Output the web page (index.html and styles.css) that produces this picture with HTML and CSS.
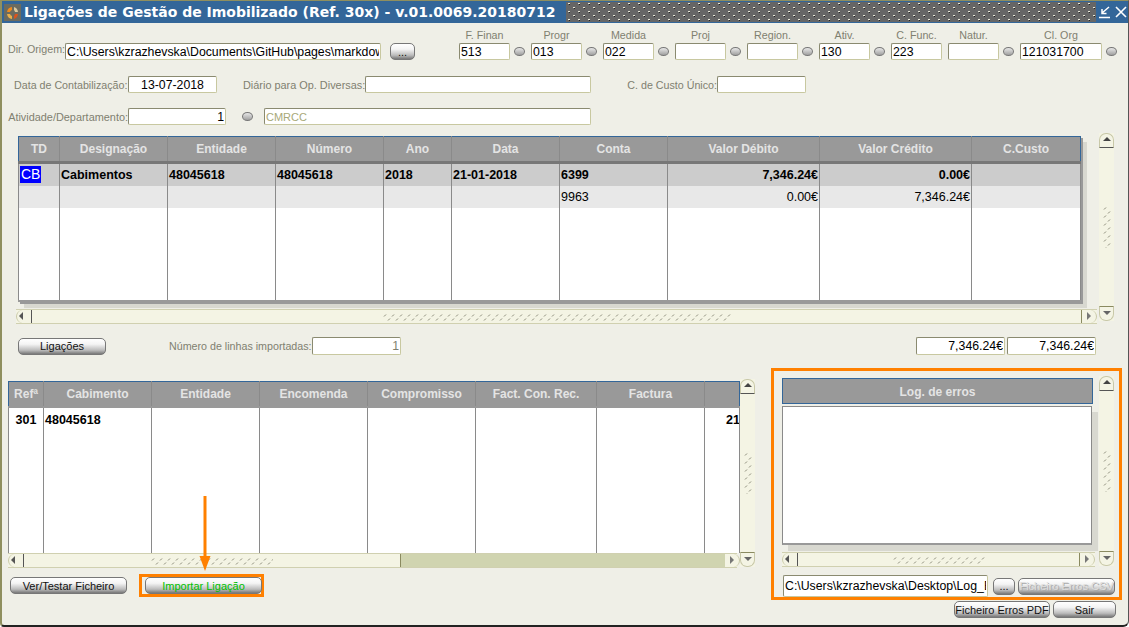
FILE: index.html
```html
<!DOCTYPE html>
<html>
<head>
  <title>Ligações de Gestão de Imobilizado</title>
  <link rel="stylesheet" href="styles.css">
</head>
<body>
  <svg class="defs" width="0" height="0">
    <defs>
      <pattern id="titleDots" width="10" height="8" patternUnits="userSpaceOnUse">
        <rect x="2" y="1" width="2" height="1" fill="#e8e8d8"/><rect x="3" y="2" width="1" height="1" fill="#222"/>
        <rect x="7" y="5" width="2" height="1" fill="#e8e8d8"/><rect x="8" y="6" width="1" height="1" fill="#222"/>
      </pattern>
      <pattern id="gripH" width="8" height="8" patternUnits="userSpaceOnUse">
        <path d="M1 3.5L3 1.5M5 7.5L7 5.5" stroke="#8a8a78" fill="none"/>
      </pattern>
      <pattern id="gripV" width="8" height="8" patternUnits="userSpaceOnUse">
        <path d="M1 3.5L3 1.5M5 7.5L7 5.5" stroke="#8a8a78" fill="none"/>
      </pattern>
    </defs>
  </svg>

  <div class="window">
    <div class="titlebar">
      <svg class="app-icon" width="17" height="17" viewBox="0 0 17 17">
        <rect width="17" height="17" fill="#6b6b60"/>
        <path d="M8 3A6 6 0 0 0 3 8L6 8A3 3 0 0 1 8 6Z" fill="#f08a1c"/>
        <path d="M10 3A6 6 0 0 1 14 8L11 8A3 3 0 0 0 10 6Z" fill="#d9c8a0"/>
        <path d="M3 10A6 6 0 0 0 8 15L8 12A3 3 0 0 1 6 10Z" fill="#e9b04a"/>
        <path d="M14 10A6 6 0 0 1 10 15L10 12A3 3 0 0 0 11 10Z" fill="#d8541e"/>
      </svg>
      <span class="title">Ligações de Gestão de Imobilizado (Ref. 30x) - v.01.0069.20180712</span>
      <svg class="title-dots" height="20"><rect width="100%" height="20" fill="#666"/><rect width="100%" height="20" fill="url(#titleDots)"/></svg>
      <svg class="win-btn" width="14" height="14" viewBox="0 0 14 14"><path d="M1 12.5H12M11 2L4 8M4 4V8.5H8.5" stroke="#fff" stroke-width="1.5" fill="none"/></svg>
      <svg class="win-btn" width="14" height="14" viewBox="0 0 14 14"><path d="M2 2L12 12M12 2L2 12" stroke="#fff" stroke-width="1.6" fill="none"/></svg>
    </div>

    <div class="origin-row">
      <label class="lbl lbl-origin">Dir. Origem:</label>
      <input class="field w-path" type="text" value="C:\Users\kzrazhevska\Documents\GitHub\pages\markdown">
      <button class="btn btn-dots">...</button>
      <div class="codes">
        <div class="code"><span class="cap">F. Finan</span><div class="code-in"><input class="field" value="513"><i class="radio"></i></div></div>
        <div class="code"><span class="cap">Progr</span><div class="code-in"><input class="field" value="013"><i class="radio"></i></div></div>
        <div class="code"><span class="cap">Medida</span><div class="code-in"><input class="field" value="022"><i class="radio"></i></div></div>
        <div class="code"><span class="cap">Proj</span><div class="code-in"><input class="field"><i class="radio"></i></div></div>
        <div class="code"><span class="cap">Region.</span><div class="code-in"><input class="field"><i class="radio"></i></div></div>
        <div class="code"><span class="cap">Ativ.</span><div class="code-in"><input class="field" value="130"><i class="radio"></i></div></div>
        <div class="code code-bare"><span class="cap">C. Func.</span><div class="code-in"><input class="field" value="223"></div></div>
        <div class="code"><span class="cap">Natur.</span><div class="code-in"><input class="field"><i class="radio"></i></div></div>
        <div class="code code-wide"><span class="cap">Cl. Org</span><div class="code-in"><input class="field" value="121031700"><i class="radio"></i></div></div>
      </div>
    </div>

    <div class="date-row">
      <label class="lbl lbl-date">Data de Contabilização:</label>
      <input class="field field-center w-date" value="13-07-2018">
      <label class="lbl lbl-diario">Diário para Op. Diversas:</label>
      <input class="field w-diario">
      <label class="lbl lbl-custo">C. de Custo Único:</label>
      <input class="field w-date">
    </div>

    <div class="dept-row">
      <label class="lbl lbl-dept">Atividade/Departamento:</label>
      <input class="field field-right w-dept" value="1">
      <i class="radio radio-dept"></i>
      <input class="field field-olive w-cmrcc" value="CMRCC">
    </div>

    <div class="main-grid">
      <div class="grid-side">
        <table class="grid grid-top">
          <colgroup><col class="c41"><col class="c108"><col class="c108"><col class="c108"><col class="c68"><col class="c108"><col class="c108"><col class="c152"><col class="c152"><col></colgroup>
          <thead><tr><th>TD</th><th>Designação</th><th>Entidade</th><th>Número</th><th>Ano</th><th>Data</th><th>Conta</th><th>Valor Débito</th><th>Valor Crédito</th><th>C.Custo</th></tr></thead>
          <tbody>
            <tr class="row-sel">
              <td class="bold"><span class="selected">CB</span></td><td class="bold">Cabimentos</td><td class="bold">48045618</td><td class="bold">48045618</td><td class="bold">2018</td><td class="bold">21-01-2018</td><td class="bold">6399</td><td class="bold num">7,346.24€</td><td class="bold num">0.00€</td><td></td>
            </tr>
            <tr class="row-alt">
              <td></td><td></td><td></td><td></td><td></td><td></td><td>9963</td><td class="num">0.00€</td><td class="num">7,346.24€</td><td></td>
            </tr>
            <tr class="row-fill"><td></td><td></td><td></td><td></td><td></td><td></td><td></td><td></td><td></td><td></td></tr>
          </tbody>
        </table>
        <div class="hscroll hscroll-top">
          <span class="sb-btn sb-left"></span>
          <span class="sb-thumb"><svg class="grip" width="348" height="8"><rect width="348" height="8" fill="url(#gripH)"/></svg></span>
          <span class="sb-btn sb-right"></span>
        </div>
      </div>
      <div class="vscroll vscroll-top">
        <span class="sb-btn sb-up"></span>
        <span class="sb-thumb"><svg class="grip" width="8" height="42"><rect width="8" height="42" fill="url(#gripV)"/></svg></span>
        <span class="sb-btn sb-down"></span>
      </div>
    </div>

    <div class="totals-row">
      <button class="btn btn-lig">Ligações</button>
      <label class="lbl lbl-linhas">Número de linhas importadas:</label>
      <input class="field field-right field-grey w-date" value="1">
      <input class="field field-right w-total first-total" value="7,346.24€">
      <input class="field field-right w-total" value="7,346.24€">
    </div>

    <div class="lower">
      <div class="lower-left">
        <div class="lower-grid">
          <div class="grid-side">
            <table class="grid grid-bottom">
              <colgroup><col class="c35"><col class="c108"><col class="c108"><col class="c108"><col class="c108"><col class="c121"><col class="c108"><col></colgroup>
              <thead><tr><th>Refª</th><th>Cabimento</th><th>Entidade</th><th>Encomenda</th><th>Compromisso</th><th>Fact. Con. Rec.</th><th>Factura</th><th></th></tr></thead>
              <tbody>
                <tr class="row-first"><td class="bold ref">301</td><td class="bold">48045618</td><td></td><td></td><td></td><td></td><td></td><td class="bold clip">21</td></tr>
                <tr class="row-fill"><td></td><td></td><td></td><td></td><td></td><td></td><td></td><td></td></tr>
              </tbody>
            </table>
            <div class="hscroll hscroll-bottom">
              <span class="sb-btn sb-left"></span>
              <span class="sb-thumb"><svg class="grip" width="122" height="8"><rect width="122" height="8" fill="url(#gripH)"/></svg></span>
              <span class="sb-track"></span>
              <span class="sb-btn sb-right"></span>
            </div>
          </div>
          <div class="vscroll vscroll-bottom">
            <span class="sb-btn sb-up"></span>
            <span class="sb-thumb"><svg class="grip" width="8" height="42"><rect width="8" height="42" fill="url(#gripV)"/></svg></span>
            <span class="sb-btn sb-down"></span>
          </div>
        </div>
        <div class="left-btns">
          <button class="btn btn-testar">Ver/Testar Ficheiro</button>
          <span class="mark-box"><button class="btn btn-importar">Importar Ligação</button></span>
        </div>
        <svg class="arrow" width="14" height="76" viewBox="0 0 14 76">
          <path d="M7 0V62" stroke="#ff8000" stroke-width="3" fill="none"/>
          <path d="M1.5 60H12.5L7 75Z" fill="#ff8000"/>
        </svg>
      </div>

      <div class="lower-right">
        <div class="log-box">
          <div class="log-body">
            <div class="grid-side">
              <div class="log-head">Log. de erros</div>
              <div class="log-area"></div>
              <div class="hscroll hscroll-log">
                <span class="sb-btn sb-left"></span>
                <span class="sb-thumb"><svg class="grip" width="92" height="8"><rect width="92" height="8" fill="url(#gripH)"/></svg></span>
                <span class="sb-btn sb-right"></span>
              </div>
            </div>
            <div class="vscroll vscroll-log">
              <span class="sb-btn sb-up"></span>
              <span class="sb-thumb"><svg class="grip" width="8" height="42"><rect width="8" height="42" fill="url(#gripV)"/></svg></span>
              <span class="sb-btn sb-down"></span>
            </div>
          </div>
          <div class="log-path">
            <input class="field w-log" value="C:\Users\kzrazhevska\Desktop\Log_Erros">
            <button class="btn btn-dots2">...</button>
            <button class="btn btn-csv">Ficheiro Erros CSV</button>
          </div>
        </div>
        <div class="right-btns">
          <button class="btn btn-pdf">Ficheiro Erros PDF</button>
          <button class="btn btn-sair">Sair</button>
        </div>
      </div>
    </div>
  </div>
</body>
</html>
```

FILE: styles.css
```css
* {
  box-sizing: border-box;
}
html, body {
  margin: 0;
  padding: 0;
}
body {
  width: 1129px;
  height: 627px;
  overflow: hidden;
  background: #fff;
  font-family: "Liberation Sans", Arial, sans-serif;
  font-size: 11px;
}
.defs {
  position: absolute;
}

.window {
  width: 1129px;
  height: 627px;
  background: #efefe7;
  border-left: 2px solid #8f8f5f;
  border-right: 1px solid #555;
  border-bottom: 2px solid #222;
  border-top: 1px solid #8f8f5f;
  border-bottom-right-radius: 6px;
  border-bottom-left-radius: 4px;
  overflow: hidden;
  position: relative;
}

/* title */
.titlebar {
  height: 22px;
  background: #336699;
  display: flex;
  align-items: center;
  margin-left: -1px;
  padding-left: 3px;
}
.app-icon {
  flex: none;
  margin-right: 3px;
}
.title {
  font-family: "DejaVu Sans", Verdana, sans-serif;
  font-weight: bold;
  font-size: 14px;
  color: #fff;
  white-space: nowrap;
  width: 542px;
  flex: none;
}
.title-dots {
  flex: none;
  width: 530px;
}
.win-btn {
  flex: none;
  margin-left: 2px;
}

/* fields */
.lbl {
  color: #808070;
  white-space: nowrap;
  font-size: 10.7px;
  text-align: right;
  flex: none;
}
.field {
  height: 17px;
  border: 1px solid #c8c8a0;
  border-top-color: #8a8a70;
  border-left-color: #8a8a70;
  border-radius: 2px;
  background: #fff;
  color: #000;
  font-family: "Liberation Sans", Arial, sans-serif;
  font-size: 12.3px;
  padding: 1px 1px;
  margin: 0;
  flex: none;
  width: 51px;
  outline: none;
}
.field-center {
  text-align: center;
}
.field-right {
  text-align: right;
}
.field-olive {
  color: #a8a878;
  font-size: 11px;
}
.field-grey {
  color: #808070;
}
.radio {
  display: block;
  flex: none;
  width: 11px;
  height: 9px;
  border: 1px solid #777;
  border-radius: 50%;
  background: linear-gradient(#e8e8e8, #a0a0a0);
}

.btn {
  height: 17px;
  padding: 0;
  border: 1px solid #777;
  border-radius: 5px;
  background: linear-gradient(#fff 0, #f4f4f4 35%, #bbb 75%, #777 100%);
  color: #111;
  font-family: "Liberation Sans", Arial, sans-serif;
  font-size: 11px;
  white-space: nowrap;
  flex: none;
}

/* top rows */
.origin-row {
  display: flex;
  margin-top: 6px;
  padding-left: 6px;
  height: 31px;
  align-items: flex-end;
}
.lbl-origin {
  width: 57px;
  align-self: flex-end;
  margin-bottom: 5px;
  font-size: 10.7px;
}
.w-path {
  width: 316px;
  margin-left: 0;
}
.btn-dots {
  width: 25px;
  margin-left: 9px;
}
.codes {
  display: flex;
  margin-left: 44px;
}
.code {
  display: flex;
  flex-direction: column;
  width: 72px;
}
.code-bare {
  width: 57px;
}
.code-wide {
  width: 103px;
}
.code-wide .field {
  width: 82px;
}
.cap {
  width: 51px;
  text-align: center;
  color: #808070;
  font-size: 10.7px;
  line-height: 13px;
  margin-bottom: 1px;
}
.code-wide .cap {
  width: 82px;
}
.code-in {
  display: flex;
  align-items: center;
  gap: 4px;
}

.date-row {
  display: flex;
  align-items: center;
  margin-top: 16px;
  padding-left: 12px;
}
.lbl-date {
  width: 113px;
  margin-right: 1px;
  text-align: left;
}
.w-date {
  width: 89px;
}
.lbl-diario {
  margin-left: 26px;
  width: 122px;
  font-size: 10.9px;
}
.w-diario {
  width: 226px;
}
.lbl-custo {
  margin-left: 36px;
  width: 90px;
}

.dept-row {
  display: flex;
  align-items: center;
  margin-top: 15px;
  padding-left: 6px;
}
.lbl-dept {
  width: 120px;
  font-size: 10.9px;
}
.w-dept {
  width: 98px;
}
.radio-dept {
  margin-left: 16px;
}
.w-cmrcc {
  width: 327px;
  margin-left: 11px;
}

/* grids */
.main-grid {
  display: flex;
  margin-top: 11px;
  padding-left: 14px;
  height: 188px;
}
.grid-side {
  display: flex;
  flex-direction: column;
  flex: none;
}
.grid {
  table-layout: fixed;
  border-collapse: collapse;
  background: #fff;
  color: #000;
  font-size: 12.5px;
}
.grid th {
  height: 26px;
  background: #999;
  color: #e4e4e4;
  font-size: 12px;
  font-weight: bold;
  padding: 0;
  border: 1px solid #336699;
  border-left-color: #8a8a8a;
  border-right-color: #8a8a8a;
}
.grid th:first-child {
  border-left-color: #336699;
}
.grid th:last-child {
  border-right-color: #336699;
}
.grid thead {
  border-bottom: 3px solid #777;
}
.grid td {
  padding: 0 1px;
  border-right: 1px solid #8a8a8a;
  border-left: 1px solid #8a8a8a;
  white-space: nowrap;
  overflow: hidden;
}
.c35 { width: 35px; }
.c41 { width: 41px; }
.c68 { width: 68px; }
.c108 { width: 108px; }
.c121 { width: 121px; }
.c152 { width: 152px; }

.grid-top {
  width: 1063px;
  margin-left: 2px;
  height: 166px;
  box-shadow: 2px 2px 0 #999, 6px 6px 0 #d8d8d0;
}
.grid-top tbody {
  border-bottom: 2px solid #999;
}
.row-sel td {
  background: #ccc;
  height: 23px;
}
.row-alt td {
  background: #e8e8e8;
  height: 22px;
}
.row-fill td {
  background: #fff;
}
.bold {
  font-weight: bold;
}
.num {
  text-align: right;
}
.selected {
  background: #0000ff;
  color: #fff;
  font-weight: normal;
  font-size: 14px;
  line-height: 17px;
  display: inline-block;
  padding: 0 1px;
}

.hscroll {
  display: flex;
  height: 15px;
  flex: none;
  background: #f4f4e4;
  border-top: 1px solid #d0d0b0;
  border-bottom: 1px solid #d0d0b0;
}
.hscroll-top {
  width: 1081px;
  margin-top: 7px;
}
.sb-btn {
  position: relative;
  flex: none;
  background: #f4f4e4;
  display: block;
}
.sb-btn::after {
  content: "";
  position: absolute;
  border: 4px solid transparent;
}
.hscroll .sb-btn {
  width: 15px;
}
.hscroll .sb-left {
  border-left: 1px solid #c8c8a8;
  border-radius: 7px 0 0 7px;
}
.hscroll .sb-left::after {
  left: 2px;
  top: 2px;
  border-left-width: 0;
  border-right-color: #555;
}
.hscroll .sb-right {
  border-right: 1px solid #c8c8a8;
  border-radius: 0 7px 7px 0;
}
.hscroll .sb-right::after {
  left: 5px;
  top: 2px;
  border-right-width: 0;
  border-left-color: #777;
}
.sb-thumb {
  display: flex;
  align-items: center;
  justify-content: center;
  flex: 1;
  min-width: 0;
  background: #f4f4e4;
  border-left: 1px solid #555;
  border-right: 1px solid #8a8a60;
}
.sb-track {
  background: #d0d4b0;
  flex: none;
  width: 324px;
}

.vscroll {
  display: flex;
  flex-direction: column;
  width: 15px;
  flex: none;
  background: #f4f4e4;
}
.vscroll-top {
  margin-left: 2px;
  height: 188px;
  margin-top: -3px;
}
.vscroll .sb-btn {
  height: 15px;
  width: 15px;
  border: 1px solid #c8c8a8;
}
.vscroll .sb-up {
  border-radius: 7px 7px 0 0;
  border-bottom-color: #555;
}
.vscroll .sb-up::after {
  left: 3px;
  top: 3px;
  border-top-width: 0;
  border-bottom-color: #444;
}
.vscroll .sb-down {
  border-radius: 0 0 7px 7px;
  border-top-color: #8a8a60;
}
.vscroll .sb-down::after {
  left: 3px;
  top: 4px;
  border-bottom-width: 0;
  border-top-color: #666;
}
.vscroll .sb-thumb {
  border: 0;
}
.grip {
  display: block;
  flex: none;
}

/* middle row */
.totals-row {
  display: flex;
  align-items: center;
  margin-top: 13px;
  padding-left: 16px;
  height: 18px;
}
.btn-lig {
  width: 88px;
}
.lbl-linhas {
  width: 143px;
  margin-left: 63px;
  margin-right: 0;
  text-align: left;
}
.totals-row .field {
  height: 18px;
}
.first-total {
  margin-left: 515px;
}
.w-total {
  width: 89px;
  margin-right: 2px;
}

/* lower part */
.lower {
  display: flex;
  margin-top: 13px;
  padding-left: 6px;
}
.lower-left {
  width: 763px;
  flex: none;
  position: relative;
}
.lower-grid {
  display: flex;
  margin-top: 13px;
  height: 188px;
}
.grid-bottom {
  width: 732px;
  height: 172px;
}
.grid-bottom th {
  height: 25px;
}
.grid-bottom thead {
  border-bottom: 2px solid #999;
}
.grid-bottom td {
  vertical-align: top;
}
.row-first td {
  height: 20px;
  padding-top: 5px;
}
.ref {
  text-align: center;
}
.clip {
  text-align: left;
  padding-left: 21px !important;
}
.hscroll-bottom {
  width: 729px;
}
.hscroll-bottom .sb-thumb {
  flex: none;
  width: 378px;
}
.vscroll-bottom {
  margin-left: 0;
  margin-top: -2px;
  height: 188px;
}
.left-btns {
  display: flex;
  align-items: center;
  margin-top: 5px;
  padding-left: 2px;
}
.btn-testar {
  width: 117px;
}
.mark-box {
  display: flex;
  margin-left: 12px;
  padding: 3px 4px;
  width: 125px;
  height: 23px;
  border: 3px solid #ff8000;
  align-items: center;
}
.btn-importar {
  width: 117px;
  flex: none;
  margin-left: -1px;
  color: #00c000;
}
.arrow {
  position: absolute;
  left: 190px;
  top: 128px;
}

.lower-right {
  width: 351px;
  flex: none;
  margin-left: 0;
}
.log-box {
  width: 351px;
  height: 232px;
  border: 3px solid #ff8000;
  padding: 7px 0 0 8px;
}
.log-body {
  display: flex;
  height: 190px;
}
.log-head {
  width: 311px;
  height: 26px;
  background: #999;
  color: #e4e4e4;
  border: 1px solid #336699;
  font-weight: bold;
  font-size: 12px;
  text-align: center;
  line-height: 26px;
}
.log-area {
  width: 310px;
  height: 139px;
  margin-top: 2px;
  background: #fff;
  border: 1px solid #8a8a8a;
  border-bottom: 2px solid #999;
  box-shadow: 6px 6px 0 #d8d8d0;
}
.hscroll-log {
  width: 313px;
  margin-top: 7px;
}
.vscroll-log {
  margin-left: 4px;
  margin-top: -2px;
  height: 190px;
}
.log-path {
  display: flex;
  align-items: center;
  margin-top: 7px;
  padding-left: 1px;
}
.w-log {
  width: 205px;
  height: 22px;
}
.btn-dots2 {
  width: 22px;
  margin-left: 5px;
}
.btn-csv {
  width: 97px;
  margin-left: 3px;
  color: #ddd;
  text-shadow: 1px 1px 0 #aaa;
  overflow: hidden;
}
.right-btns {
  display: flex;
  justify-content: flex-end;
  gap: 3px;
  padding-right: 6px;
  margin-top: 1px;
}
.btn-pdf {
  width: 96px;
}
.btn-sair {
  width: 63px;
}
```
